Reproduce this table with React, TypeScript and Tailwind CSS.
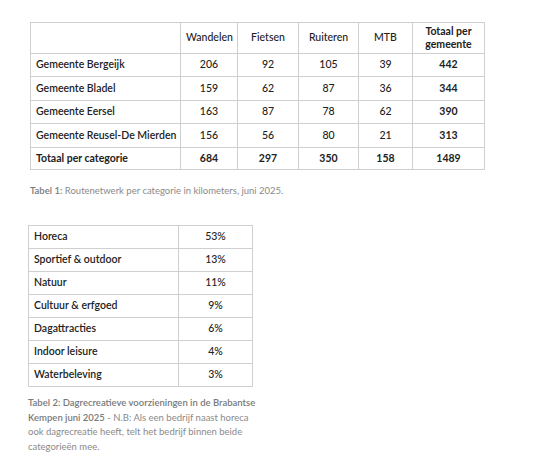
import React from 'react';

const routes = [
  { name: 'Gemeente Bergeijk', w: 206, f: 92, r: 105, m: 39, t: 442 },
  { name: 'Gemeente Bladel', w: 159, f: 62, r: 87, m: 36, t: 344 },
  { name: 'Gemeente Eersel', w: 163, f: 87, r: 78, m: 62, t: 390 },
  { name: 'Gemeente Reusel-De Mierden', w: 156, f: 56, r: 80, m: 21, t: 313 },
];

const recreatie = [
  ['Horeca', '53%'],
  ['Sportief & outdoor', '13%'],
  ['Natuur', '11%'],
  ['Cultuur & erfgoed', '9%'],
  ['Dagattracties', '6%'],
  ['Indoor leisure', '4%'],
  ['Waterbeleving', '3%'],
];

const cell = 'border border-[#cfcfcf] px-[5px] whitespace-nowrap';

export default function App() {
  return (
    <div className="w-[542px] h-[460px] bg-white text-[#222] font-['Lato','Liberation_Sans',sans-serif] overflow-hidden">
      <div className="pt-[22px] pl-[30px]">
        <table className="table-fixed border-collapse text-[10.5px] w-[454px]">
          <colgroup>
            <col className="w-[150px]" />
            <col className="w-[57px]" />
            <col className="w-[61px]" />
            <col className="w-[60px]" />
            <col className="w-[54px]" />
            <col className="w-[72px]" />
          </colgroup>
          <thead>
            <tr className="h-[31px]">
              <th className={cell}></th>
              <th className={`${cell} text-center font-medium`}>Wandelen</th>
              <th className={`${cell} text-center font-medium`}>Fietsen</th>
              <th className={`${cell} text-center font-medium`}>Ruiteren</th>
              <th className={`${cell} text-center font-medium`}>MTB</th>
              <th className={`${cell} text-center font-bold leading-[13px]`}>
                Totaal per
                <br />
                gemeente
              </th>
            </tr>
          </thead>
          <tbody>
            {routes.map((row, i) => (
              <tr key={row.name} className={i % 2 === 0 ? 'h-[23px]' : 'h-[24px]'}>
                <td className={`${cell} font-semibold`}>{row.name}</td>
                <td className={`${cell} text-center font-medium`}>{row.w}</td>
                <td className={`${cell} text-center font-medium`}>{row.f}</td>
                <td className={`${cell} text-center font-medium`}>{row.r}</td>
                <td className={`${cell} text-center font-medium`}>{row.m}</td>
                <td className={`${cell} text-center font-bold`}>{row.t}</td>
              </tr>
            ))}
            <tr className="h-[22px] font-bold">
              <td className={cell}>Totaal per categorie</td>
              <td className={`${cell} text-center`}>684</td>
              <td className={`${cell} text-center`}>297</td>
              <td className={`${cell} text-center`}>350</td>
              <td className={`${cell} text-center`}>158</td>
              <td className={`${cell} text-center`}>1489</td>
            </tr>
          </tbody>
        </table>
        <p className="mt-[14px] text-[9.5px] text-[#8a8a8a]">
          <span className="font-semibold text-[#7a7a7a]">Tabel 1:</span> Routenetwerk per categorie in kilometers, juni 2025.
        </p>
      </div>

      <div className="pt-[27px] pl-[28px]">
        <table className="table-fixed border-collapse text-[10.5px] w-[224px]">
          <colgroup>
            <col className="w-[150px]" />
            <col className="w-[74px]" />
          </colgroup>
          <tbody>
            {recreatie.map(([label, pct]) => (
              <tr key={label} className="h-[23px]">
                <td className={`${cell} font-semibold`}>{label}</td>
                <td className={`${cell} text-center font-medium`}>{pct}</td>
              </tr>
            ))}
          </tbody>
        </table>
        <p className="mt-[9px] w-[232px] text-[9.5px] leading-[14.5px] text-[#8a8a8a]">
          <span className="font-semibold text-[#7a7a7a]">Tabel 2: Dagrecreatieve voorzieningen in de Brabantse Kempen juni 2025</span> - N.B: Als een bedrijf naast horeca ook dagrecreatie heeft, telt het bedrijf binnen beide categorieën mee.
        </p>
      </div>
    </div>
  );
}
